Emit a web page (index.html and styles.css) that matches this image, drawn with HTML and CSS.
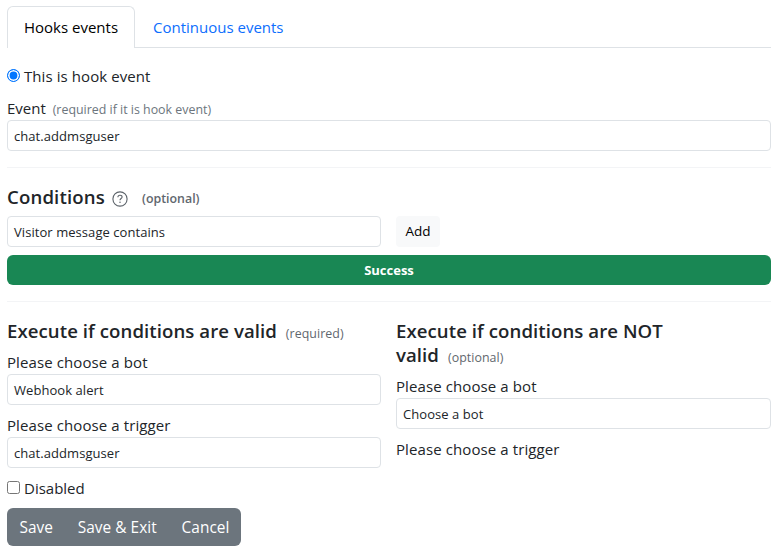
FILE: index.html
```html
<!DOCTYPE html>
<html lang="en">
<head>
<meta charset="utf-8">
<title>Hook events</title>
<link rel="stylesheet" href="styles.css">
</head>
<body>
<nav class="tabs">
  <a class="tab active">Hooks events</a>
  <a class="tab">Continuous events</a>
</nav>
<main>
  <label class="check"><span class="radio"></span><span class="choice">This is hook event</span></label>
  <div class="group event">
    <div class="label"><span>Event</span> <small>(required if it is hook event)</small></div>
    <div class="input">chat.addmsguser</div>
  </div>
  <hr>
  <h5 class="cond">Conditions
    <svg class="help" viewBox="0 0 16 16" fill="none" stroke="#5c636a"><circle cx="8" cy="8" r="7.1" stroke-width="1.1"/><path d="M5.9 6.2C5.9 4.9 6.8 4.2 8 4.2s2.1.7 2.1 1.8C10.1 7.5 8 7.6 8 9.3" stroke-width="1.1"/><circle cx="8" cy="11.3" r=".75" fill="#5c636a" stroke="none"/></svg>
    <small>(optional)</small></h5>
  <div class="row">
    <div class="input">Visitor message contains</div>
    <div><button class="add">Add</button></div>
  </div>
  <div class="success">Success</div>
  <hr>
  <div class="row">
    <section>
      <h5>Execute if conditions are valid <small>(required)</small></h5>
      <div class="group"><div class="label">Please choose a bot</div><div class="input">Webhook alert</div></div>
      <div class="group"><div class="label">Please choose a trigger</div><div class="input">chat.addmsguser</div></div>
    </section>
    <section>
      <h5>Execute if conditions are NOT<br>valid <small>(optional)</small></h5>
      <div class="group"><div class="label">Please choose a bot</div><div class="input">Choose a bot</div></div>
      <div class="label">Please choose a trigger</div>
    </section>
  </div>
  <label class="check disabled"><span class="box"></span><span>Disabled</span></label>
  <div class="buttons"><button>Save</button><button>Save &amp; Exit</button><button>Cancel</button></div>
</main>
</body>
</html>
```
FILE: styles.css
```css
* { box-sizing: border-box; }
body {
  margin: 0;
  padding: 6px 4px 0 7px;
  font: 15px/24px "Open Sans", "Noto Sans", sans-serif;
  color: #212529;
  background: #fff;
  white-space: nowrap;
}
.tabs { display: flex; height: 42px; border-bottom: 1px solid #dee2e6; }
.tab {
  height: 42px;
  padding: 8px 17px 0;
  border: 1px solid transparent;
  border-bottom: 0;
  border-radius: 6px 6px 0 0;
  color: #0d6efd;
  line-height: 24px;
}
.tab.active { width: 128px; padding: 8px 16px 0; border-color: #dee2e6; background: #fff; color: #000; }
main { padding-top: 16px; }
.check { display: flex; align-items: center; height: 24px; gap: 4px; }
.choice { letter-spacing: 0.08px; }
.radio { width: 13px; height: 13px; border: 1px solid #0075ff; border-radius: 50%; background: #0075ff; box-shadow: inset 0 0 0 1.6px #fff; margin-top: -1px; }
.box { width: 13px; height: 13px; border: 1px solid #767676; border-radius: 2.5px; margin-top: -1px; }
.group { margin-bottom: 8px; }
.label { height: 24px; }
.event { margin: 9px 0 0; }
.event .label { height: 23px; line-height: 22px; }
small { margin-left: 4px; font-size: 12.4px; color: #6c757d; }
.event small { margin-left: 3px; }
.input {
  height: 31px;
  padding: 4px 6px;
  border: 1px solid #dee2e6;
  border-radius: 4px;
  font-size: 13px;
  letter-spacing: 0.06px;
  line-height: 22px;
}
hr { height: 1px; margin: 16px 0 17px; border: 0; background: #f3f4f6; }
h5 { height: 24px; margin: 0 0 8px; font-size: 18.6px; font-weight: 600; letter-spacing: 0.07px; line-height: 24px; }
h5 small { font-size: 12.4px; font-weight: 500; letter-spacing: 0.05px; color: #5f676e; }
.cond { display: flex; align-items: center; margin-bottom: 7px; letter-spacing: 0.15px; }
.help { width: 16px; height: 16px; margin: 3px 0 0 7px; }
.cond small { margin: 4px 0 0 14px; font-weight: 600; letter-spacing: 0; }
.row { display: grid; grid-template-columns: 374px 375px; gap: 15px; }
.add { width: 44px; height: 31px; padding: 0; border: 0; border-radius: 4px; background: #f8f9fa; font: 13.5px/31px "Open Sans", sans-serif; color: #000; }
.success { height: 30px; margin-top: 8px; border-radius: 6px; background: #198754; color: #fff; font-size: 13px; font-weight: 700; line-height: 30px; text-align: center; }
section:last-child h5 { height: 48px; }
section .label { height: 23px; line-height: 22px; letter-spacing: 0.1px; }
section .group + .group .label, section .group + .label { height: 24px; line-height: 24px; }
.disabled { margin-top: 0; }
.buttons { display: flex; width: 234px; height: 38px; margin-top: 8px; border-radius: 6px; background: #6c757d; }
.buttons button { padding: 2px 12.4px 0; border: 0; background: none; font: 15.4px/36px "Open Sans", sans-serif; letter-spacing: 0.05px; color: #fff; }
```
